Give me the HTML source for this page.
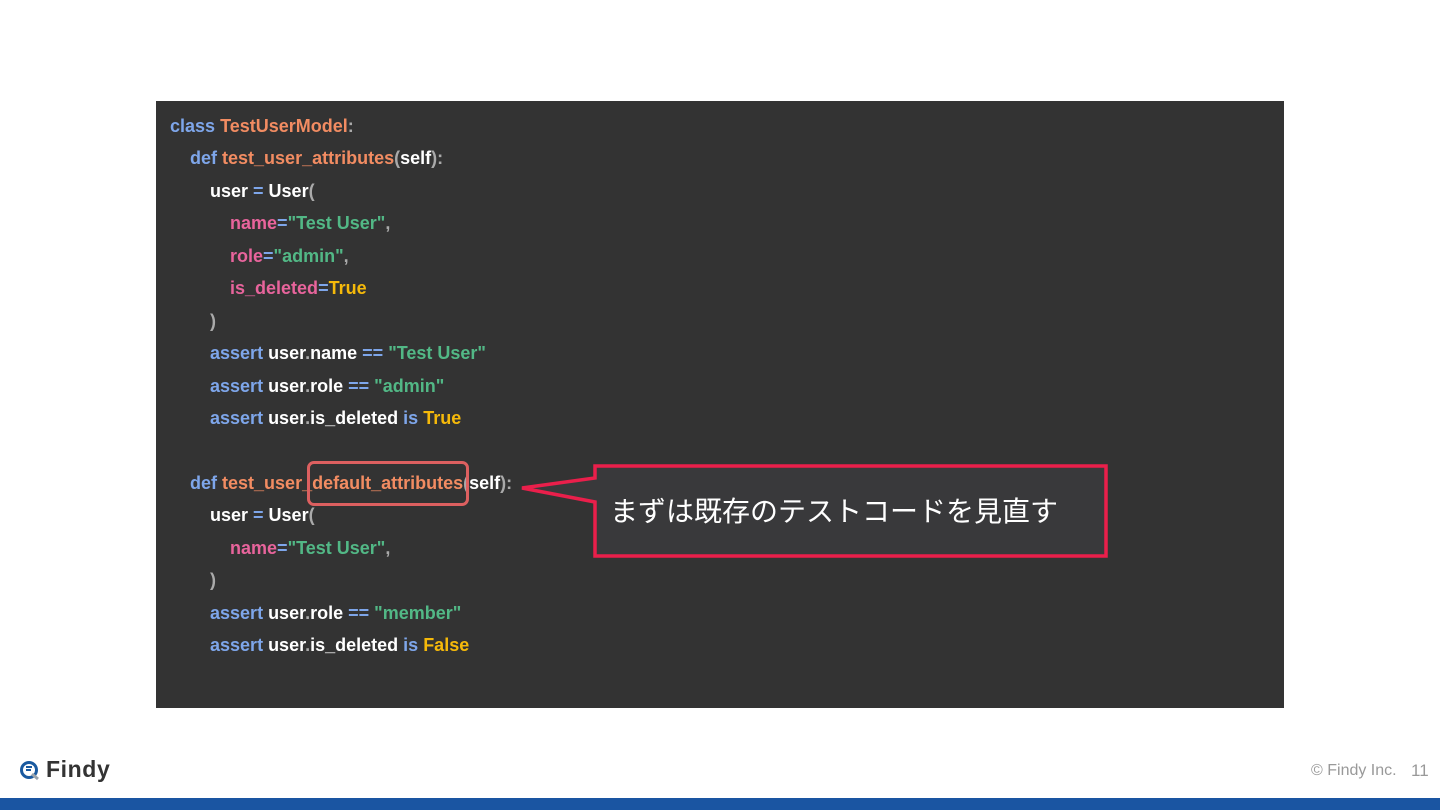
<!DOCTYPE html>
<html><head><meta charset="utf-8"><style>
body{margin:0;width:1440px;height:810px;background:#fff;position:relative;overflow:hidden;font-family:"Liberation Sans",sans-serif}
.code{position:absolute;left:156px;top:101px;width:1128px;height:607px;background:#333333}
.lines{position:absolute;left:170px;top:110px;font:bold 18px/32.45px "Liberation Sans",sans-serif;color:#fff;white-space:pre}
.k{color:#7ea6ea}.f{color:#f28c62}.p{color:#e8649c}.s{color:#52b886}.y{color:#f5b90a}.g{color:#aaa}
.hl{position:absolute;left:307px;top:461px;width:156px;height:39px;border:3px solid #dd6060;border-radius:7px}
.foot{position:absolute;left:0;top:798px;width:1440px;height:12px;background:#1a55a2}
</style></head><body>
<div class="code"></div>
<div class="lines"><span class="k">class</span> <span class="f">TestUserModel</span><span class="g">:</span>
    <span class="k">def</span> <span class="f">test_user_attributes</span><span class="g">(</span>self<span class="g">):</span>
        user <span class="k">=</span> User<span class="g">(</span>
            <span class="p">name</span><span class="k">=</span><span class="s">"Test User"</span><span class="g">,</span>
            <span class="p">role</span><span class="k">=</span><span class="s">"admin"</span><span class="g">,</span>
            <span class="p">is_deleted</span><span class="k">=</span><span class="y">True</span>
        <span class="g">)</span>
        <span class="k">assert</span> user<span class="g">.</span>name <span class="k">==</span> <span class="s">"Test User"</span>
        <span class="k">assert</span> user<span class="g">.</span>role <span class="k">==</span> <span class="s">"admin"</span>
        <span class="k">assert</span> user<span class="g">.</span>is_deleted <span class="k">is</span> <span class="y">True</span>

    <span class="k">def</span> <span class="f">test_user_default_attributes</span><span class="g">(</span>self<span class="g">):</span>
        user <span class="k">=</span> User<span class="g">(</span>
            <span class="p">name</span><span class="k">=</span><span class="s">"Test User"</span><span class="g">,</span>
        <span class="g">)</span>
        <span class="k">assert</span> user<span class="g">.</span>role <span class="k">==</span> <span class="s">"member"</span>
        <span class="k">assert</span> user<span class="g">.</span>is_deleted <span class="k">is</span> <span class="y">False</span></div>
<div class="hl"></div>
<svg style="position:absolute;left:0;top:0" width="1440" height="810">
<polygon points="595,466 1106,466 1106,556 595,556 595,502 522,488 595,478" fill="#39393b" stroke="#ea1f4b" stroke-width="3.5" stroke-linejoin="miter"/>
<g transform="translate(20,760)">
<circle cx="9" cy="10" r="7.5" fill="none" stroke="#1a5aa0" stroke-width="3"/>
<path d="M12 14 L18 19" stroke="#9aa4ad" stroke-width="3"/>
<path d="M6 7 h6 M6 10 h5" stroke="#1a5aa0" stroke-width="2"/>
</g>
</svg>
<div style="position:absolute;left:610px;top:493px;font:28px/38px 'Liberation Sans','Noto Sans CJK JP',sans-serif;color:#fff">まずは既存のテストコードを見直す</div>
<div style="position:absolute;left:46px;top:756px;font:bold 23px/27px 'Liberation Sans',sans-serif;color:#333;letter-spacing:0.6px">Findy</div>
<div style="position:absolute;left:1311px;top:761px;font:16px/19px 'Liberation Sans',sans-serif;color:#999">© Findy Inc.</div>
<div style="position:absolute;left:1411px;top:761px;font:17px/20px 'Liberation Sans',sans-serif;color:#999">11</div>
<div class="foot"></div>
</body></html>
